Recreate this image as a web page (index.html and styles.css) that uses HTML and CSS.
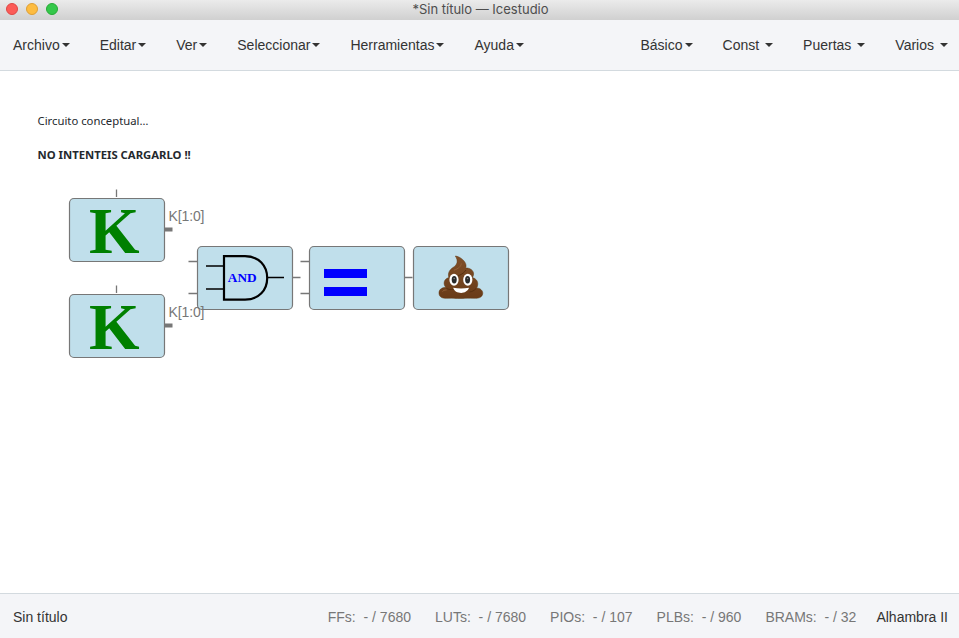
FILE: index.html
```html
<!DOCTYPE html>
<html lang="es">
<head>
<meta charset="utf-8">
<title>Icestudio</title>
<link rel="stylesheet" href="styles.css">
</head>
<body>
<header class="titlebar">
  <div class="lights"><i class="light close"></i><i class="light minimize"></i><i class="light maximize"></i></div>
  <span class="window-title">*Sin título — Icestudio</span>
</header>
<nav class="navbar">
  <div class="menus">
    <a class="menu">Archivo<b class="caret"></b></a>
    <a class="menu">Editar<b class="caret"></b></a>
    <a class="menu">Ver<b class="caret"></b></a>
    <a class="menu">Seleccionar<b class="caret"></b></a>
    <a class="menu">Herramientas<b class="caret"></b></a>
    <a class="menu">Ayuda<b class="caret"></b></a>
  </div>
  <div class="menus">
    <a class="menu">Básico<b class="caret"></b></a>
    <a class="menu spaced">Const<b class="caret"></b></a>
    <a class="menu spaced">Puertas<b class="caret"></b></a>
    <a class="menu spaced">Varios<b class="caret"></b></a>
  </div>
</nav>
<main class="canvas">
  <div class="note">
    <p>Circuito conceptual…</p>
    <p><strong>NO INTENTEIS CARGARLO !!</strong></p>
  </div>
  <svg class="diagram" width="959" height="522" viewBox="0 71 959 522">
    <defs>
      <linearGradient id="brown" x1="0" y1="0" x2="0" y2="1">
        <stop offset="0" stop-color="#805029"/><stop offset="1" stop-color="#693b17"/>
      </linearGradient>
    </defs>
    <g class="wires">
      <path d="M116.5 189.500V197M116.500 285.500V293M188.500 261.500H197M188.500 293.500H197M292.500 277.500H300.500M300.500 261.500H309M300.500 293.500H309M404.500 277.500H412.500"/>
      <path class="bus" d="M165 229.500H172.500M165 325.500H172.500"/>
    </g>
    <g class="block">
      <rect x="69.500" y="198.500" width="95" height="63" rx="4.500"/>
      <rect x="69.500" y="294.500" width="95" height="63" rx="4.500"/>
      <rect x="197.500" y="246.500" width="95" height="63" rx="4.500"/>
      <rect x="309.500" y="246.500" width="95" height="63" rx="4.500"/>
      <rect x="413.500" y="246.500" width="95" height="63" rx="4.500"/>
    </g>
    <text class="constant" x="89" y="253">K</text>
    <text class="constant" x="89" y="349">K</text>
    <text class="port" x="168.500" y="221" textLength="36">K[1:0]</text>
    <text class="port" x="168.500" y="317" textLength="36">K[1:0]</text>
    <g class="gate">
      <path d="M224 256.200H245C259 256.200 267.200 266 267.200 278C267.200 290 259 299.700 245 299.700H224Z"/>
      <path class="pin" d="M206 266H224M206 289H224M267 277.500H284"/>
    </g>
    <text class="gate-name" x="227.700" y="282" textLength="29">AND</text>
    <path class="equals" d="M324 269h43v9h-43zM324 287h43v9h-43z"/>
    <g>
      <path fill="url(#brown)" stroke="#633812" stroke-width=".5" d="M455.300 256C460 256.500 465.500 261 466 265C466.200 266.300 466 267.200 465.600 268C470 267.700 473.800 270.500 473.600 274C473.500 275.300 473.200 276.500 472.400 277.500C476 278.500 478.300 281.500 477.700 285C477.500 286.200 477.200 287.200 476.600 288C480.500 288 483.300 291 482.700 294C482 297.500 478.500 298.600 474 298.300C469 298 466 298.200 461 298.500C456 298.700 453 297.800 448 298.300C443 298.700 439.400 297.500 439 293.500C438.700 289.700 441.300 287.700 445.700 287.300C443 284 443.500 279.300 448.800 277.500C447.500 272.500 450 269.500 453 267.500C457.500 264.700 458.500 261 455.300 256Z"/>
      <path fill="none" stroke="#58300f" stroke-width="1" d="M451 276.500C457 277.200 463 274.500 466 270M471 278.500C469.700 279.800 468.500 280.700 467 281.200M446.500 288.500C450 290.200 453 289.500 455 288.500M476 288.500C474 290.800 472 291.700 469.500 292"/>
      <path fill="none" stroke="#946239" stroke-width="1" d="M454 270.200C458.500 268.600 461 266.500 461.300 263.500M442.500 291.500C443.500 290.300 445 290 446.500 290"/>
      <ellipse cx="454" cy="279.700" rx="4.600" ry="6" fill="#fff"/>
      <ellipse cx="467.800" cy="279.700" rx="4.600" ry="6" fill="#fff"/>
      <ellipse cx="454.200" cy="279.700" rx="2.500" ry="3.700" fill="#292b2c"/>
      <ellipse cx="467.600" cy="279.700" rx="2.500" ry="3.700" fill="#292b2c"/>
      <circle cx="454.200" cy="278.500" r=".8" fill="#858788"/><circle cx="467.600" cy="278.500" r=".8" fill="#858788"/>
      <path fill="#fff" d="M453.200 287.800Q461 289.300 469 287.800C468 291 464.500 293 461.200 293C457.500 293 454.200 291.200 453.200 287.800Z"/>
    </g>
  </svg>
</main>
<footer class="statusbar">
  <span class="project">Sin título</span>
  <div class="resources">
    <span>FFs:&nbsp; - / 7680</span>
    <span>LUTs:&nbsp; - / 7680</span>
    <span>PIOs:&nbsp; - / 107</span>
    <span>PLBs:&nbsp; - / 960</span>
    <span>BRAMs:&nbsp; - / 32</span>
  </div>
  <span class="board">Alhambra II</span>
</footer>
</body>
</html>
```
FILE: styles.css
```css
* { box-sizing: border-box; }
body {
  margin: 0;
  height: 638px;
  display: flex;
  flex-direction: column;
  overflow: hidden;
  background: #fff;
  color: #333;
  font: 14px/20px "Liberation Sans", Arial, sans-serif;
}
.titlebar {
  height: 20px;
  display: grid;
  grid-template-columns: 1fr auto 1fr;
  background: linear-gradient(#ebebeb, #d0d0d0);
}
.lights { display: flex; gap: 8px; padding: 3px 0 0 6px; }
.light { width: 12px; height: 12px; border-radius: 50%; border: 1px solid; }
.close { background: #fc5b57; border-color: #df4744; }
.minimize { background: #fdbc40; border-color: #de9f34; }
.maximize { background: #34c84a; border-color: #27aa35; }
.window-title { color: #4d4d4d; font: 13px/19px Inter, sans-serif; letter-spacing: 0; padding-left: 2px; }
.navbar {
  height: 51px;
  display: flex;
  justify-content: space-between;
  padding: 15px 11px 0 13px;
  background: #f4f5f8;
  border-bottom: 1px solid #d3dadf;
}
.menus { display: flex; gap: 30px; }
.menu { display: flex; align-items: center; height: 20px; gap: 2px; }
.spaced { gap: 6px; }
.caret { width: 8px; height: 4px; border: 4px solid transparent; border-top-color: #333; border-bottom: 0; }
.canvas { position: relative; flex: 1; }
.note {
  position: absolute;
  left: 37.5px;
  top: 41px;
  color: #24292e;
  font: 11.3px/18px "Noto Sans", sans-serif;
}
.note p { margin: 0 0 16px; }
.diagram { position: absolute; left: 0; top: 0; }
.wires path { fill: none; stroke: #777; stroke-width: 1.3; }
.wires .bus { stroke-width: 4; }
.block rect { fill: #c0dfeb; stroke: #777; stroke-width: 1.2; }
.constant { font: bold 65px "Liberation Serif", serif; fill: green; }
.port { font: 14px "Liberation Sans", sans-serif; fill: #777; }
.gate path { fill: none; stroke: #000; stroke-width: 2.2; }
.gate .pin { stroke-width: 1.6; }
.gate-name { font: bold 13.3px "Liberation Serif", serif; fill: blue; }
.equals { fill: blue; }
.statusbar {
  height: 45px;
  display: flex;
  padding: 13px 11px 0 13px;
  background: #f4f5f8;
  border-top: 1px solid #d3dadf;
}
.resources { display: flex; gap: 24px; margin: 0 20px 0 auto; color: #777; }
```
